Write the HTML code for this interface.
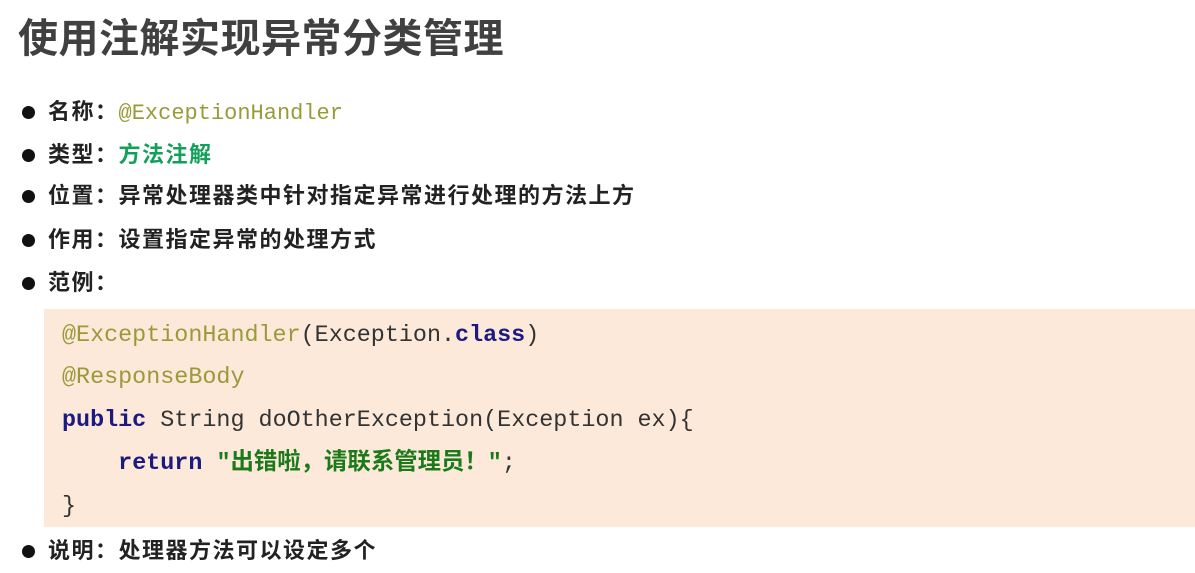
<!DOCTYPE html>
<html><head><meta charset="utf-8"><style>
body{margin:0;width:1195px;height:573px;background:#fff;position:relative;overflow:hidden;font-family:"Liberation Sans","Noto Sans CJK SC",sans-serif;}
.t{position:absolute;left:18px;top:6px;font-size:40px;font-weight:bold;color:#404040;letter-spacing:0.5px}
.b{position:absolute;left:22px;font-size:22px;font-weight:bold;color:#222;letter-spacing:1.5px;line-height:30px;white-space:nowrap}
.b:before{content:"";position:absolute;left:0;top:9px;width:13px;height:13px;border-radius:50%;background:#111}
.b span.l{margin-left:26px}
.mono{font-family:"Liberation Mono",monospace;font-weight:normal;letter-spacing:0}
.ann{color:#9a9a3a}
.code{position:absolute;left:44px;top:309px;width:1151px;height:218px;background:#fce9d9}
.cl{position:absolute;left:18px;font-family:"Liberation Mono",monospace;font-size:23.4px;color:#333;white-space:pre;line-height:30px}
.kw{color:#1a1a80;font-weight:bold}
.str{color:#1a7a1a;font-weight:bold;font-family:"Liberation Mono","Noto Sans CJK SC",monospace}
</style></head><body>
<div class="t">使用注解实现异常分类管理</div>
<div class="b" style="top:97px"><span class="l">名称：</span><span class="mono ann">@ExceptionHandler</span></div>
<div class="b" style="top:140px"><span class="l">类型：</span><span style="color:#13a05a">方法注解</span></div>
<div class="b" style="top:181px"><span class="l">位置：异常处理器类中针对指定异常进行处理的方法上方</span></div>
<div class="b" style="top:225px"><span class="l">作用：设置指定异常的处理方式</span></div>
<div class="b" style="top:268px"><span class="l">范例：</span></div>
<div class="code">
<div class="cl" style="top:12px"><span class="ann">@ExceptionHandler</span>(Exception.<span class="kw">class</span>)</div>
<div class="cl" style="top:54px"><span class="ann">@ResponseBody</span></div>
<div class="cl" style="top:97px"><span class="kw">public</span> String doOtherException(Exception ex){</div>
<div class="cl" style="top:140px">    <span class="kw">return</span> <span class="str">"出错啦，请联系管理员！"</span>;</div>
<div class="cl" style="top:183px">}</div>
</div>
<div class="b" style="top:536px"><span class="l">说明：处理器方法可以设定多个</span></div>
</body></html>
